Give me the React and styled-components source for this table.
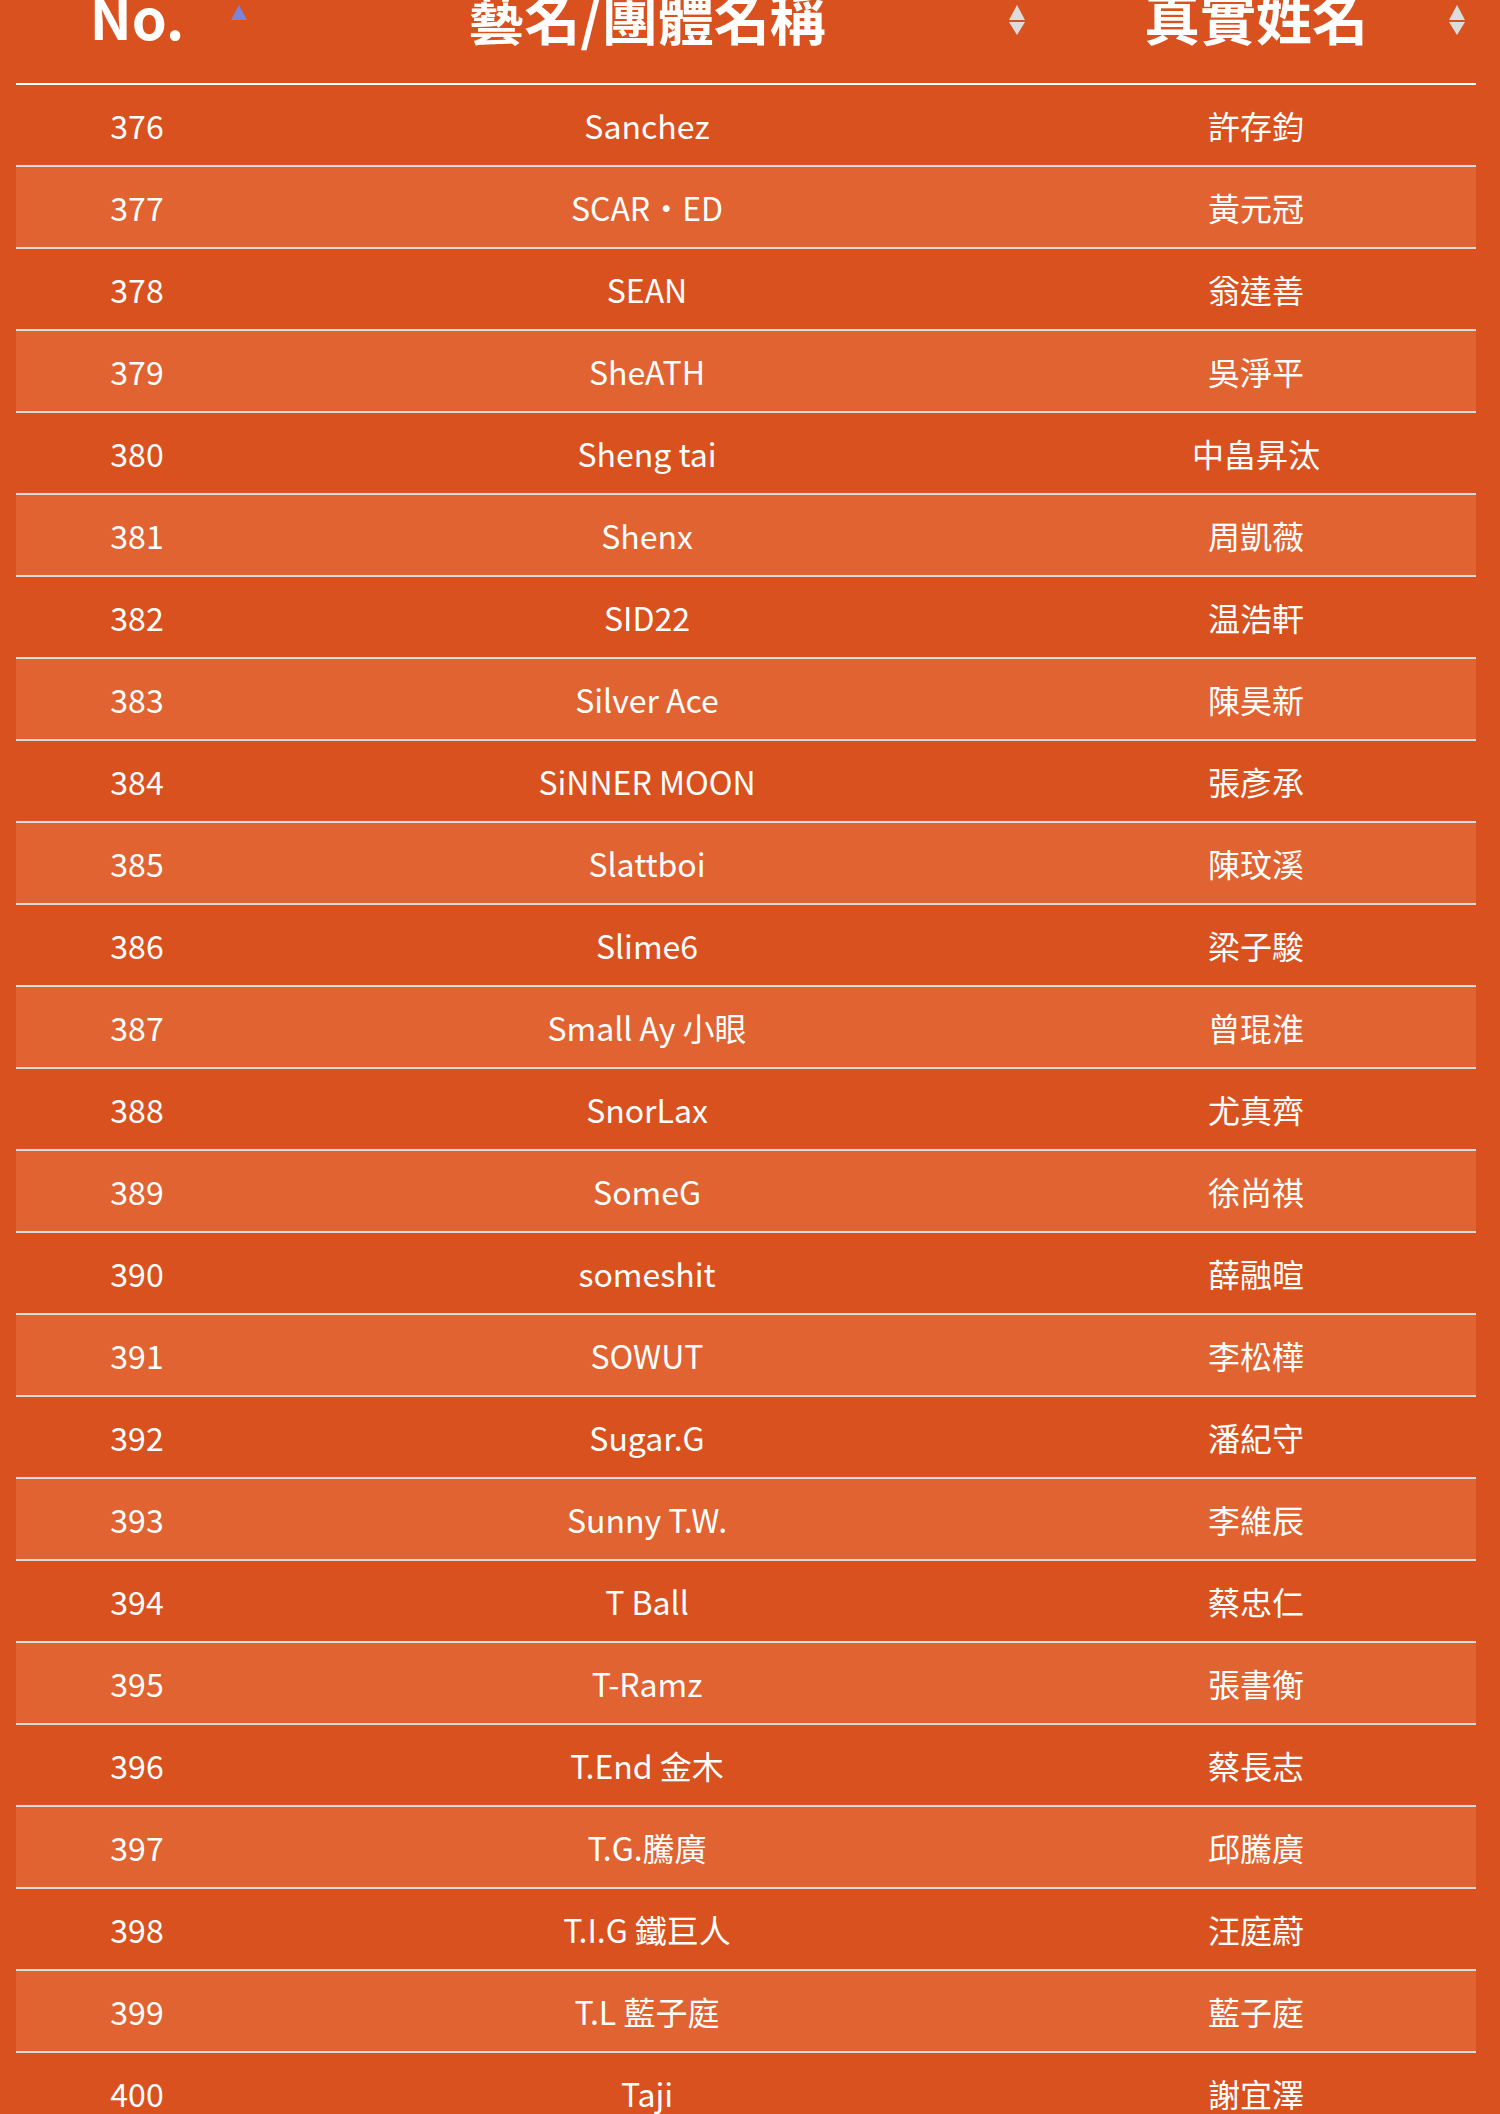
import React from 'react'
import styled, { createGlobalStyle } from 'styled-components'

const rows = [
  [376, 'Sanchez', '許存鈞'],
  [377, 'SCAR・ED', '黃元冠'],
  [378, 'SEAN', '翁達善'],
  [379, 'SheATH', '吳淨平'],
  [380, 'Sheng tai', '中畠昇汰'],
  [381, 'Shenx', '周凱薇'],
  [382, 'SID22', '温浩軒'],
  [383, 'Silver Ace', '陳昊新'],
  [384, 'SiNNER MOON', '張彥承'],
  [385, 'Slattboi', '陳玟溪'],
  [386, 'Slime6', '梁子駿'],
  [387, 'Small Ay 小眼', '曾琨淮'],
  [388, 'SnorLax', '尤真齊'],
  [389, 'SomeG', '徐尚祺'],
  [390, 'someshit', '薛融暄'],
  [391, 'SOWUT', '李松樺'],
  [392, 'Sugar.G', '潘紀守'],
  [393, 'Sunny T.W.', '李維辰'],
  [394, 'T Ball', '蔡忠仁'],
  [395, 'T-Ramz', '張書衡'],
  [396, 'T.End 金木', '蔡長志'],
  [397, 'T.G.騰廣', '邱騰廣'],
  [398, 'T.I.G 鐵巨人', '汪庭蔚'],
  [399, 'T.L 藍子庭', '藍子庭'],
  [400, 'Taji', '謝宜澤'],
]

const GlobalStyle = createGlobalStyle`
  html, body {
    margin: 0;
    padding: 0;
    background: #d9511e;
    overflow: hidden;
  }
  body {
    font-family: "Noto Sans CJK TC", "Noto Sans", sans-serif;
    color: #fff;
  }
`

const Wrapper = styled.div`
  width: 100%;
  height: 2114px;
  overflow: hidden;
  padding-left: 16px;
  box-sizing: border-box;
`

const Table = styled.table`
  width: 1460px;
  margin-top: -12px;
  border-collapse: collapse;
  table-layout: fixed;
`

const Th = styled.th`
  position: relative;
  height: 95px;
  padding: 0 0 39px;
  box-sizing: border-box;
  vertical-align: bottom;
  font-size: 56px;
  font-weight: 700;
  line-height: 1;
  text-align: center;
  border-bottom: 2px solid #fff;
  cursor: pointer;

  &::before,
  &::after {
    content: '';
    position: absolute;
    right: 11px;
    width: 0;
    height: 0;
    border-left: 8px solid transparent;
    border-right: 8px solid transparent;
  }
  &::before {
    bottom: 63px;
    border-bottom: 15px solid ${p => (p.$active ? '#7b84d9' : '#dcdcdc')};
  }
  &::after {
    bottom: 48px;
    border-top: 13px solid #dcdcdc;
    display: ${p => (p.$active ? 'none' : 'block')};
  }
`

const Row = styled.tr`
  background: ${p => (p.$odd ? '#e06331' : 'transparent')};
  border-bottom: 2px solid #dcdcdc;
`

const Td = styled.td`
  height: 80px;
  padding: 0;
  font-size: 32px;
  text-align: center;
  vertical-align: middle;
  white-space: nowrap;
`

export default function App() {
  return (
    <Wrapper>
      <GlobalStyle />
      <Table>
        <colgroup>
          <col style={{ width: 242 }} />
          <col style={{ width: 778 }} />
          <col style={{ width: 440 }} />
        </colgroup>
        <thead>
          <tr>
            <Th $active>No.</Th>
            <Th>藝名/團體名稱</Th>
            <Th>真實姓名</Th>
          </tr>
        </thead>
        <tbody>
          {rows.map(([no, stage, real], i) => (
            <Row key={no} $odd={i % 2 === 1}>
              <Td>{no}</Td>
              <Td>{stage}</Td>
              <Td>{real}</Td>
            </Row>
          ))}
        </tbody>
      </Table>
    </Wrapper>
  )
}
